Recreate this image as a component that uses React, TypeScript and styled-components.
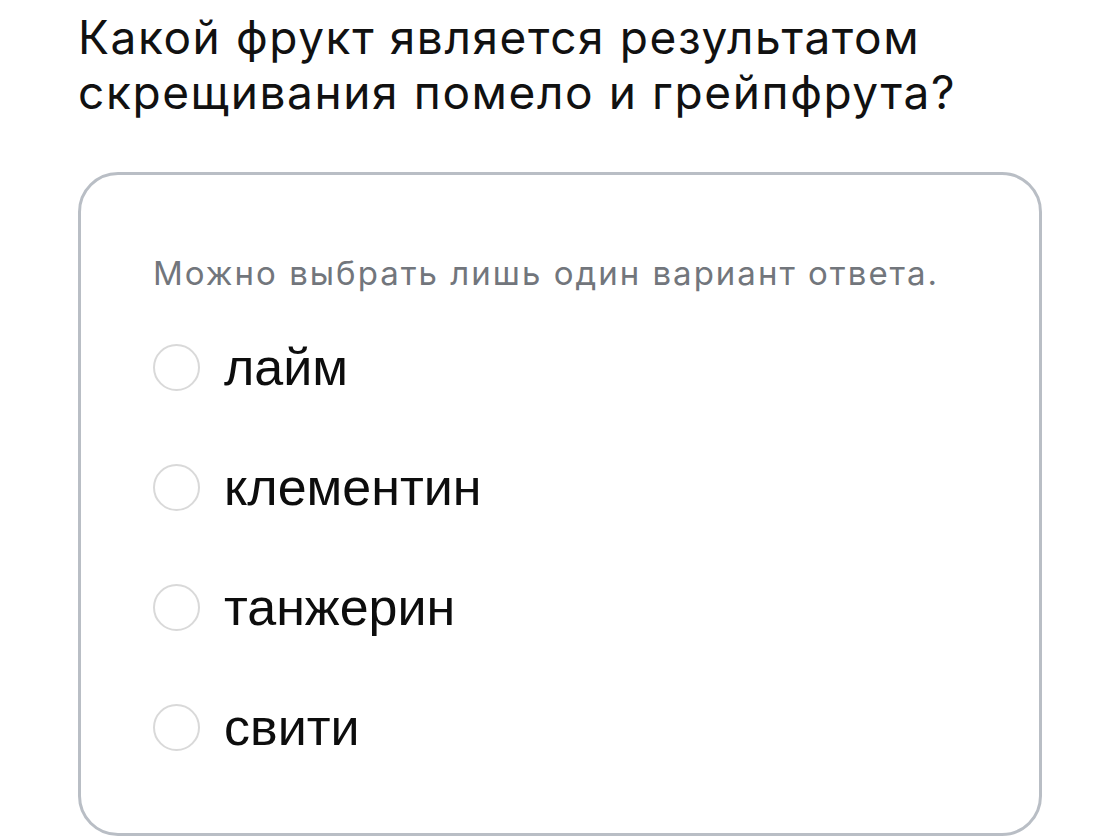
import React from 'react';
import styled, { createGlobalStyle } from 'styled-components';

const GlobalStyle = createGlobalStyle`
  html, body {
    margin: 0;
    padding: 0;
    background: #ffffff;
  }
`;

const Page = styled.div`
  padding: 10px 52px 0 78px;
  box-sizing: border-box;
  width: 1094px;
  height: 838px;
  overflow: hidden;
`;

const Question = styled.h1`
  margin: 0;
  font-family: Inter, "Noto Sans", sans-serif;
  font-weight: 400;
  font-size: 46px;
  line-height: 55px;
  color: #111111;
  letter-spacing: 1.6px;
`;

const Card = styled.div`
  margin-top: 52px;
  width: 964px;
  height: 664px;
  box-sizing: border-box;
  border: 3px solid #b9bec5;
  border-radius: 40px;
  padding: 78px 72px 0 72px;
`;

const Hint = styled.p`
  margin: 0 0 50px 0;
  font-family: Inter, "Noto Sans", sans-serif;
  font-size: 33px;
  line-height: 40px;
  letter-spacing: 2px;
  color: #72767c;
`;

const Options = styled.div`
  display: flex;
  flex-direction: column;
  gap: 72px;
`;

const Option = styled.label`
  display: flex;
  align-items: center;
  gap: 24px;
  cursor: pointer;
  height: 48px;
`;

const Radio = styled.span`
  width: 47px;
  height: 47px;
  box-sizing: border-box;
  border-radius: 50%;
  border: 2.5px solid #d9d9d9;
  flex-shrink: 0;
`;

const OptionText = styled.span`
  font-family: "Liberation Sans", Arial, sans-serif;
  font-size: 52px;
  line-height: 48px;
  color: #0d0d0d;
`;

const answers = ['лайм', 'клементин', 'танжерин', 'свити'];

export default function App() {
  return (
    <Page>
      <GlobalStyle />
      <Question>
        Какой фрукт является результатом
        <br />
        скрещивания помело и грейпфрута?
      </Question>
      <Card>
        <Hint>Можно выбрать лишь один вариант ответа.</Hint>
        <Options>
          {answers.map((a) => (
            <Option key={a}>
              <Radio />
              <OptionText>{a}</OptionText>
            </Option>
          ))}
        </Options>
      </Card>
    </Page>
  );
}
